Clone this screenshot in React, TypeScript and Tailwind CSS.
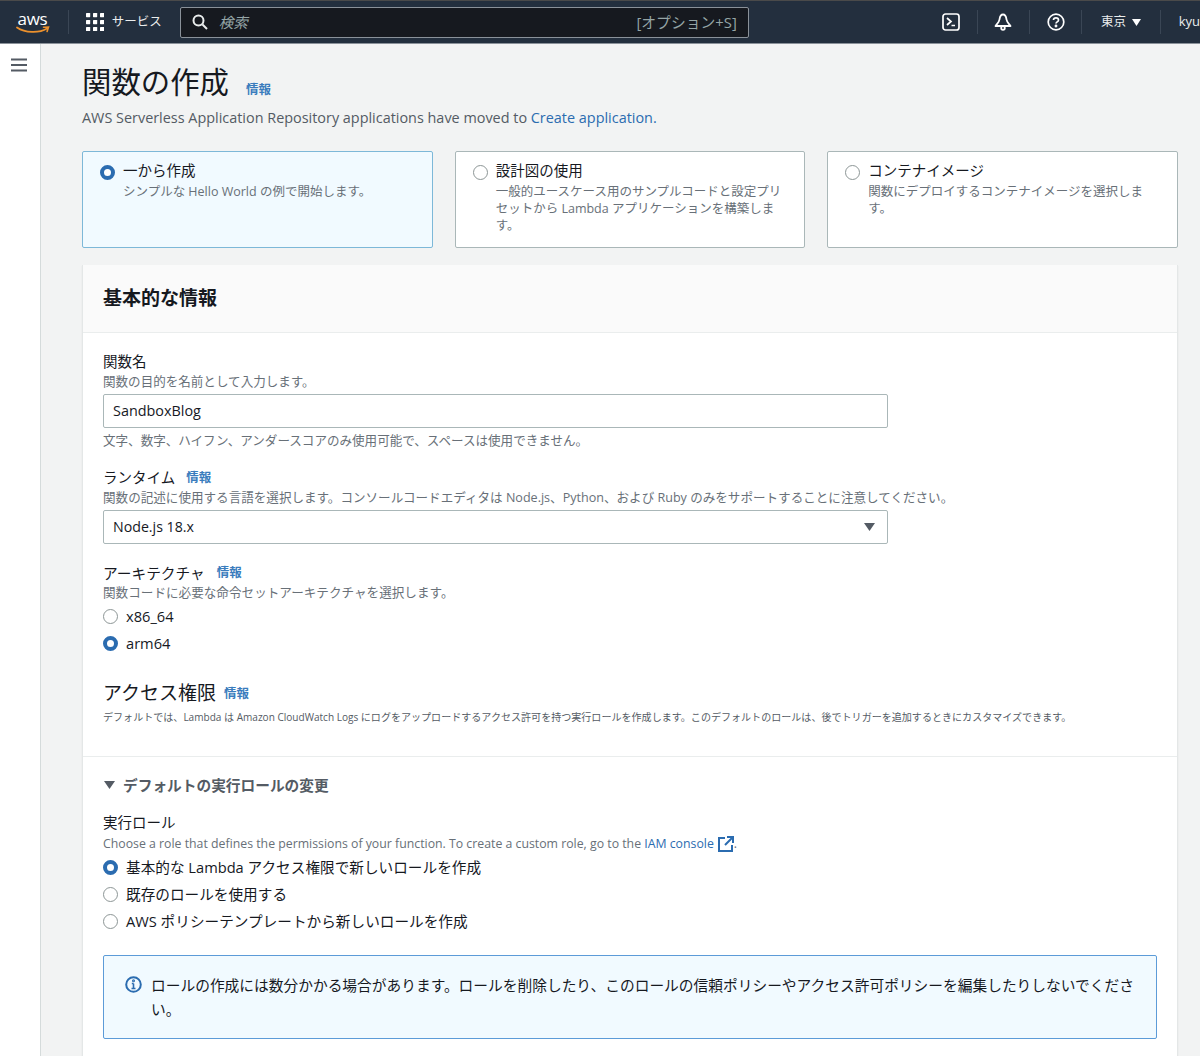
import React from "react";

const FONT = '"Open Sans","Noto Sans CJK JP",sans-serif';

function Radio({ on }: { on?: boolean }) {
  return on ? (
    <span className="block w-[15px] h-[15px] rounded-full border-[4px] border-[#2b6cb0] bg-white shrink-0" />
  ) : (
    <span className="block w-[15px] h-[15px] rounded-full border-[1.5px] border-[#8d9696] bg-white shrink-0" />
  );
}

function Info({ className = "" }: { className?: string }) {
  return <span className={"text-[12.5px] font-bold text-[#3a7cbd] " + className}>情報</span>;
}

function Card({ on, title, desc }: { on?: boolean; title: string; desc: React.ReactNode }) {
  return (
    <div className={"flex-1 h-[97px] rounded-[2px] border px-[17px] pt-[9px] flex gap-[8px] " + (on ? "border-[#7db8d8] bg-[#f1faff]" : "border-[#aab7b8] bg-white")}>
      <div className="pt-[4px]"><Radio on={on} /></div>
      <div>
        <div className="text-[14.5px] leading-[20px] text-[#16191f]">{title}</div>
        <div className="text-[12.5px] leading-[17px] text-[#687078] mt-[2px]">{desc}</div>
      </div>
    </div>
  );
}

function RadioRow({ on, label, h }: { on?: boolean; label: string; h: string }) {
  return (
    <div className={"flex items-center gap-2 text-[14.65px] text-[#16191f] " + h}>
      <Radio on={on} />
      <span>{label}</span>
    </div>
  );
}

export default function App() {
  return (
    <div className="w-[1200px] h-[1056px] overflow-hidden bg-[#f2f3f3] flex flex-col" style={{ fontFamily: FONT }}>
      <header className="h-[44px] shrink-0 bg-[#232f3e] border-t border-t-[#4a4a4a] border-b border-b-[#8a9199] flex items-center text-[#eaeded] overflow-hidden">
        <div className="w-[68px] shrink-0 flex justify-center">
          <div className="flex flex-col items-center w-[34px] mr-[3px]">
            <span className="text-[17px] leading-[15px] font-normal text-white tracking-[-0.3px]">aws</span>
            <svg width="34" height="8" viewBox="0 0 34 8" fill="none">
              <path d="M1 1.5C9 7 23 7.5 31 2.5" stroke="#ec912d" strokeWidth="1.8" strokeLinecap="round" />
              <path d="M27.5 1.2L32.5 1l-1.4 4.4" stroke="#ec912d" strokeWidth="1.6" strokeLinecap="round" />
            </svg>
          </div>
        </div>
        <div className="w-px h-[24px] bg-[#3a4655]" />
        <svg className="ml-[17px] shrink-0" width="18" height="18" viewBox="0 0 18 18" fill="#fff">
          {[0, 7, 14].flatMap((y) => [0, 7, 14].map((x) => <rect key={x + "-" + y} x={x} y={y} width="4.2" height="4.2" rx="0.6" />))}
        </svg>
        <span className="ml-[8px] text-[12.5px] w-[51px] shrink-0 whitespace-nowrap">サービス</span>
        <div className="ml-[17px] w-[569px] h-[31px] shrink-0 rounded-[2px] border border-[#8a9199] bg-[#16191f] flex items-center px-[11px]">
          <svg width="16" height="16" viewBox="0 0 16 16" fill="none" stroke="#eaeded" strokeWidth="2">
            <circle cx="6.5" cy="6.5" r="5" />
            <path d="M10.5 10.5L15 15" />
          </svg>
          <span className="ml-[11px] text-[14.5px] italic text-[#95a5a6] translate-y-px">検索</span>
          <span className="ml-auto text-[14.8px] text-[#95a5a6]">[オプション+S]</span>
        </div>
        <svg className="ml-[193px] shrink-0" width="18" height="18" viewBox="0 0 18 18" fill="none" stroke="#fff" strokeWidth="1.7">
          <rect x="1" y="1" width="16" height="16" rx="2.5" />
          <path d="M5 5l4 3.5L5 12M9.5 12.5H13" />
        </svg>
        <div className="ml-[17px] w-px h-[24px] bg-[#3a4655]" />
        <svg className="ml-[17px] shrink-0" width="18" height="18" viewBox="0 0 18 18" fill="none" stroke="#fff" strokeWidth="1.8">
          <path d="M9 1.5C6.5 1.5 5.8 4 5.5 6.5 5.2 9 3 11 1.5 13h15C15 11 12.8 9 12.5 6.5 12.2 4 11.5 1.5 9 1.5z" strokeLinejoin="round" />
          <circle cx="9" cy="15" r="1.8" />
        </svg>
        <div className="ml-[17px] w-px h-[24px] bg-[#3a4655]" />
        <svg className="ml-[17px] shrink-0" width="18" height="18" viewBox="0 0 18 18" fill="none" stroke="#fff" strokeWidth="1.7">
          <circle cx="9" cy="9" r="7.8" />
          <path d="M6.5 7C6.5 5.5 7.7 4.8 9 4.8s2.5.8 2.5 2.1c0 2-2.5 2-2.5 3.7" />
          <circle cx="9" cy="13" r="0.6" fill="#fff" />
        </svg>
        <div className="ml-[16px] w-px h-[24px] bg-[#3a4655]" />
        <span className="ml-[19px] text-[12.5px] shrink-0">東京</span>
        <svg className="ml-[6px] shrink-0" width="9" height="7" viewBox="0 0 9 7" fill="#fff"><path d="M0 0h9L4.5 7z" /></svg>
        <div className="ml-[19px] w-px h-[24px] bg-[#3a4655]" />
        <span className="ml-[18px] text-[13px] shrink-0">kyu</span>
      </header>

      <div className="flex flex-1 min-h-0">
        <aside className="w-[41px] shrink-0 bg-white border-r border-[#d5dbdb] pt-[14px] flex justify-center">
          <svg className="mr-[3px]" width="16" height="14" viewBox="0 0 16 14" stroke="#545b64" strokeWidth="2">
            <path d="M0 1.5h16M0 7h16M0 12.5h16" />
          </svg>
        </aside>

        <main className="flex-1 min-w-0 pl-[41px] pr-[22px]">
          <div className="h-[59px] flex items-end">
            <h1 className="text-[29.4px] leading-[42px] font-normal text-[#16191f]">関数の作成</h1>
            <Info className="ml-[17px] mb-[3px]" />
          </div>
          <p className="mt-[5px] text-[14.42px] leading-[20px] text-[#545b64]">
            AWS Serverless Application Repository applications have moved to <span className="text-[#2b6cb0]">Create application.</span>
          </p>

          <div className="mt-[23px] flex gap-[22px]">
            <Card on title="一から作成" desc="シンプルな Hello World の例で開始します。" />
            <Card title="設計図の使用" desc="一般的ユースケース用のサンプルコードと設定プリセットから Lambda アプリケーションを構築します。" />
            <Card title="コンテナイメージ" desc="関数にデプロイするコンテナイメージを選択します。" />
          </div>

          <section className="mt-[17px] bg-white border-x border-[#e4e7e7] shadow-[0_1px_1px_rgba(0,0,0,0.1)] h-[900px]">
            <div className="h-[68px] bg-[#fafafa] border-b border-[#eaeded] px-[20px] flex items-center">
              <h2 className="text-[19px] font-bold text-[#16191f]">基本的な情報</h2>
            </div>

            <div className="px-[20px]">
              <div className="pt-[18px] text-[14.5px] leading-[22px] text-[#16191f]">関数名</div>
              <div className="mt-[1px] text-[12.55px] leading-[16px] text-[#687078]">関数の目的を名前として入力します。</div>
              <div className="mt-[4px] w-[785px] h-[34px] border border-[#aab7b8] rounded-[2px] flex items-center px-[9px] text-[14.4px] text-[#16191f]">SandboxBlog</div>
              <div className="mt-[4px] text-[12.55px] leading-[18px] text-[#687078]">文字、数字、ハイフン、アンダースコアのみ使用可能で、スペースは使用できません。</div>

              <div className="mt-[17px] flex items-center h-[22px] text-[14.5px] text-[#16191f]">ランタイム<Info className="ml-[11px]" /></div>
              <div className="mt-[1px] text-[12.57px] leading-[16px] text-[#687078] whitespace-nowrap">関数の記述に使用する言語を選択します。コンソールコードエディタは Node.js、Python、および Ruby のみをサポートすることに注意してください。</div>
              <div className="mt-[4px] w-[785px] h-[34px] border border-[#aab7b8] rounded-[2px] flex items-center justify-between pl-[9px] pr-[12px] text-[14.2px] text-[#16191f]">
                Node.js 18.x
                <svg width="11" height="8" viewBox="0 0 11 8" fill="#545b64"><path d="M0 0h11L5.5 8z" /></svg>
              </div>

              <div className="mt-[18px] flex items-center h-[22px] text-[14.7px] text-[#16191f]">アーキテクチャ<Info className="ml-[12px]" /></div>
              <div className="mt-[1px] text-[12.6px] leading-[16px] text-[#687078]">関数コードに必要な命令セットアーキテクチャを選択します。</div>
              <RadioRow label="x86_64" h="h-[27px] mt-[2px]" />
              <RadioRow on label="arm64" h="h-[27px]" />

              <div className="mt-[22px] flex items-center h-[28px]">
                <h3 className="text-[19px] font-normal text-[#16191f]">アクセス権限</h3>
                <Info className="ml-[8px] mt-[3px]" />
              </div>
              <div className="mt-[2px] text-[10.05px] leading-[16px] text-[#545b64] whitespace-nowrap">デフォルトでは、Lambda は Amazon CloudWatch Logs にログをアップロードするアクセス許可を持つ実行ロールを作成します。このデフォルトのロールは、後でトリガーを追加するときにカスタマイズできます。</div>
            </div>

            <div className="mt-[31px] border-t border-[#eaeded] px-[20px]">
              <div className="mt-[18px] flex items-center h-[20px] gap-[8px]">
                <svg className="ml-px" width="11" height="8" viewBox="0 0 11 8" fill="#545b64"><path d="M0 0h11L5.5 8z" /></svg>
                <span className="text-[14.7px] font-bold text-[#545b64]">デフォルトの実行ロールの変更</span>
              </div>
              <div className="mt-[17px] text-[14.5px] leading-[22px] text-[#16191f]">実行ロール</div>
              <div className="mt-[1px] flex items-center text-[12.3px] leading-[18px] text-[#687078]">
                Choose a role that defines the permissions of your function. To create a custom role, go to the&nbsp;
                <span className="text-[#2b6cb0]">IAM console</span>
                <svg className="ml-[4px]" width="16" height="16" viewBox="0 0 16 16" fill="none" stroke="#2b6cb0" strokeWidth="2">
                  <path d="M7 2H1v13h13V9M9 1h6v6M15 1L7 9" />
                </svg>
                <span>.</span>
              </div>
              <RadioRow on label="基本的な Lambda アクセス権限で新しいロールを作成" h="h-[27px] mt-[1px]" />
              <RadioRow label="既存のロールを使用する" h="h-[27px]" />
              <RadioRow label="AWS ポリシーテンプレートから新しいロールを作成" h="h-[27px]" />

              <div className="mt-[20px] w-[1054px] h-[84px] border border-[#5c9bd8] rounded-[2px] bg-[#f1faff] pl-[21px] pr-[20px] pt-[17px] flex gap-[9px]">
                <svg className="mt-[3px] shrink-0" width="17" height="17" viewBox="0 0 17 17" fill="none" stroke="#2b6cb0" strokeWidth="2">
                  <circle cx="8.5" cy="8.5" r="7.3" />
                  <path d="M8.5 7.5v5M6.5 12.5h4M6.8 7.5h1.7" strokeWidth="1.6" />
                  <circle cx="8.5" cy="4.8" r="0.5" fill="#2b6cb0" />
                </svg>
                <p className="text-[14.72px] leading-[24px] text-[#16191f]">ロールの作成には数分かかる場合があります。ロールを削除したり、このロールの信頼ポリシーやアクセス許可ポリシーを編集したりしないでください。</p>
              </div>
            </div>
          </section>
        </main>
      </div>
    </div>
  );
}
